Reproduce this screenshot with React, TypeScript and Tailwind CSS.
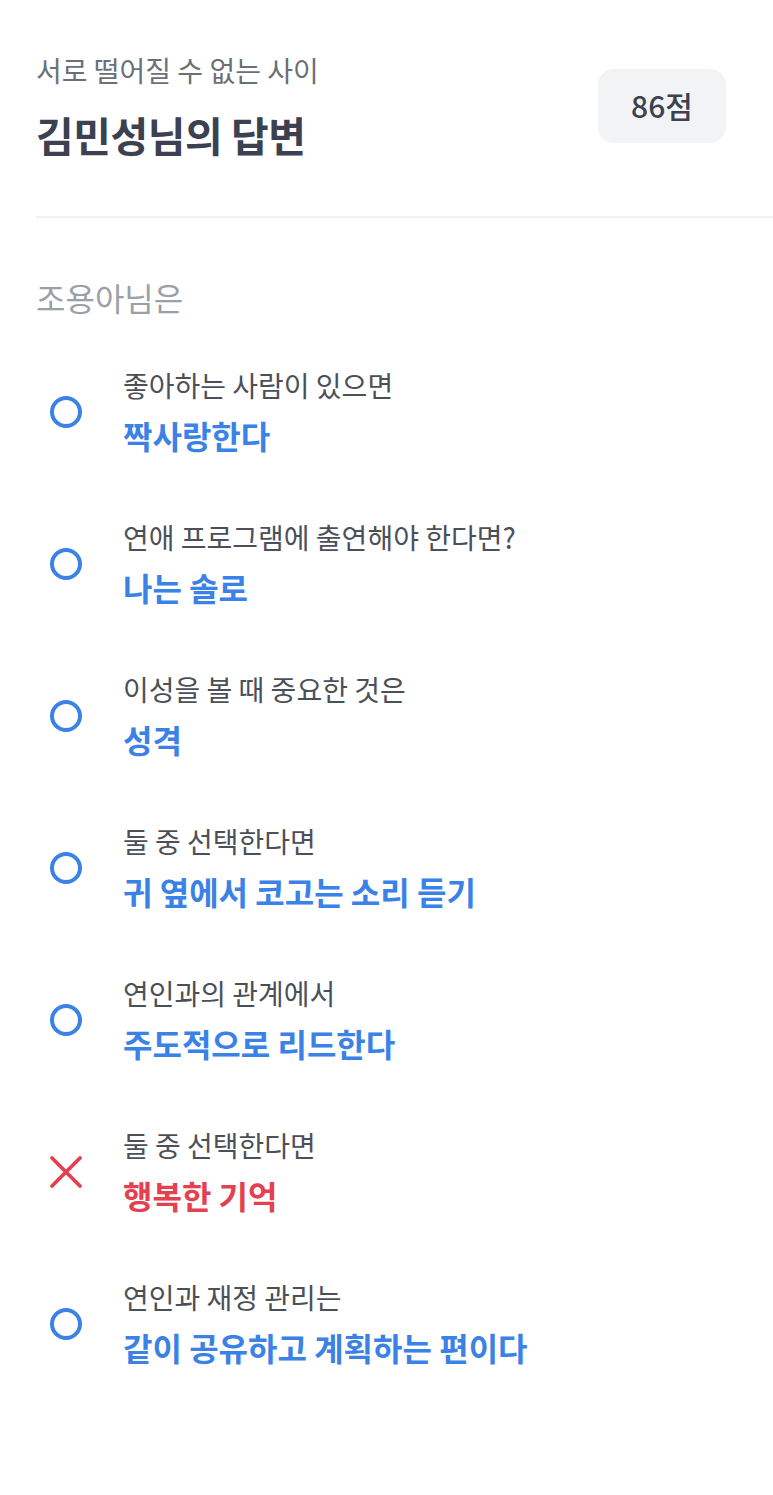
const items = [
  { q: '좋아하는 사람이 있으면', a: '짝사랑한다', ok: true },
  { q: '연애 프로그램에 출연해야 한다면?', a: '나는 솔로', ok: true },
  { q: '이성을 볼 때 중요한 것은', a: '성격', ok: true },
  { q: '둘 중 선택한다면', a: '귀 옆에서 코고는 소리 듣기', ok: true },
  { q: '연인과의 관계에서', a: '주도적으로 리드한다', ok: true },
  { q: '둘 중 선택한다면', a: '행복한 기억', ok: false },
  { q: '연인과 재정 관리는', a: '같이 공유하고 계획하는 편이다', ok: true },
]

function CircleMark() {
  return (
    <svg width="34" height="34" viewBox="0 0 34 34" fill="none">
      <circle cx="17" cy="17" r="14" stroke="#3b82e6" strokeWidth="4" />
    </svg>
  )
}

function CrossMark() {
  return (
    <svg width="34" height="34" viewBox="0 0 34 34" fill="none">
      <path d="M3 3L31 31M31 3L3 31" stroke="#e5404f" strokeWidth="3.8" strokeLinecap="round" />
    </svg>
  )
}

export default function App() {
  return (
    <div
      className="min-h-[1495px] bg-white pl-9 pt-[51px]"
      style={{ fontFamily: '"Noto Sans CJK KR", "Noto Sans", sans-serif' }}
    >
      <div className="flex items-center justify-between pr-[47px]">
        <div className="flex flex-col gap-[19px]">
          <div className="text-[28px] leading-[38px] text-[#6b7078]">서로 떨어질 수 없는 사이</div>
          <div className="text-[41px] leading-[52px] font-bold text-[#3b4150] tracking-[-0.5px]">김민성님의 답변</div>
        </div>
        <div className="flex h-[74px] w-[128px] items-center justify-center rounded-2xl bg-[#f2f3f5] text-[30px] font-medium text-[#3b4150]">
          86점
        </div>
      </div>

      <div className="mt-[56px] h-[2px] bg-[#f0f1f3]" />

      <div className="mt-[57px] text-[32px] leading-[44px] text-[#9aa0a8]">조용아님은</div>

      <div className="mt-[47px] flex flex-col gap-[61px]">
        {items.map((it, i) => (
          <div key={i} className="flex items-center gap-[27px]">
            <div className="flex w-[60px] justify-center">
              {it.ok ? <CircleMark /> : <CrossMark />}
            </div>
            <div className="flex flex-col gap-[9px]">
              <div className="text-[28px] leading-[38px] text-[#4b5058]">{it.q}</div>
              <div
                className={
                  'text-[32px] leading-[44px] font-bold ' +
                  (it.ok ? 'text-[#3b82e6]' : 'text-[#e5404f]')
                }
              >
                {it.a}
              </div>
            </div>
          </div>
        ))}
      </div>
    </div>
  )
}
